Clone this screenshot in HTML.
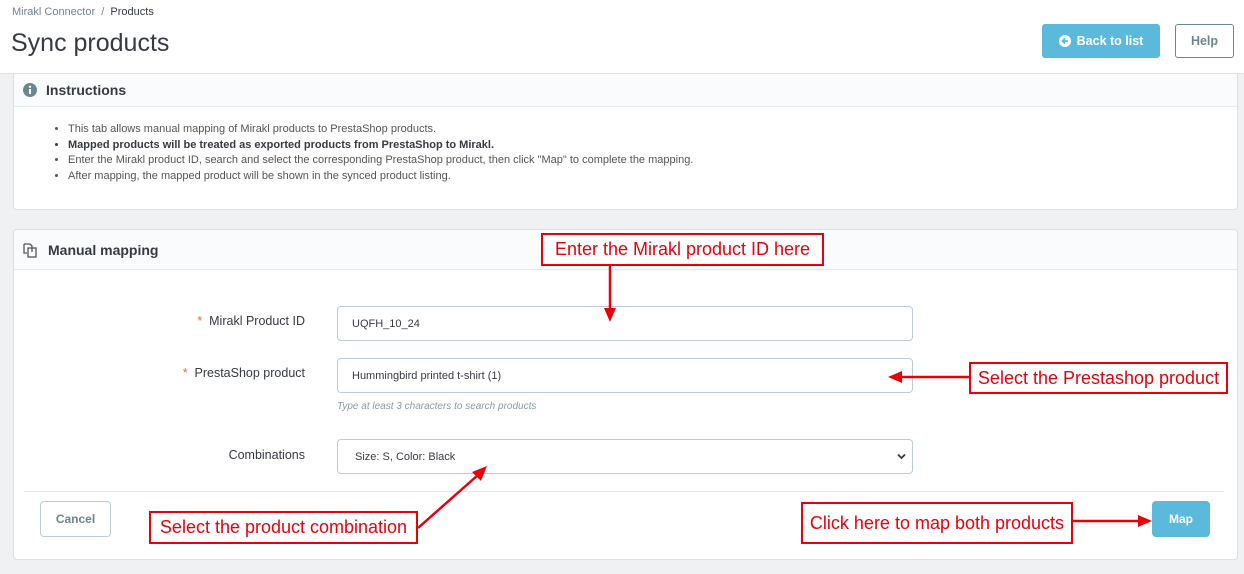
<!DOCTYPE html>
<html><head><meta charset="utf-8"><style>
*{box-sizing:border-box;margin:0;padding:0}
body{width:1244px;height:574px;background:#eff1f2;font-family:"Liberation Sans",sans-serif;color:#363a41;position:relative;overflow:hidden}
.a{position:absolute}
.hdr{left:0;top:0;width:1244px;height:74px;background:#fff;border-bottom:1px solid #dfe3e6}
.panel{background:#fff;border:1px solid #dbe0e3;border-radius:4px}
.ph{background:#fafbfc;border-bottom:1px solid #e4e8ea;font-weight:bold;font-size:14px;color:#363a41}
.inp{background:#fff;border:1px solid #bbcdd2;border-radius:4px;font-size:11px;color:#363a41;padding-left:14px;display:flex;align-items:center}
.lbl{font-size:12.5px;color:#363a41;text-align:right}
.red{border:2px solid #e8000b;background:#fff;color:#e8000b;font-size:18px;display:flex;align-items:center;justify-content:center;white-space:nowrap}
li{margin-left:14px}
</style></head><body>
<div class="a hdr"></div>
<div class="a" style="left:12px;top:6px;font-size:11px;color:#6c868e">Mirakl Connector &nbsp;/&nbsp; <span style="color:#363a41">Products</span></div>
<div class="a" style="left:11px;top:29px;font-size:25px;color:#363a41">Sync products</div>
<div class="a" style="left:1042px;top:24px;width:118px;height:34px;background:#5bbadb;border-radius:3px;color:#fff;font-weight:bold;font-size:12.5px;display:flex;align-items:center;justify-content:center;gap:6px"><svg width="12" height="12" viewBox="0 0 12 12"><circle cx="6" cy="6" r="6" fill="#fff"/><path d="M9 6H4M6 3.5L3.5 6 6 8.5" stroke="#5bbadb" stroke-width="1.8" fill="none"/></svg>Back to list</div>
<div class="a" style="left:1175px;top:24px;width:59px;height:34px;border:1px solid #6c868e;border-radius:3px;color:#6c868e;font-weight:bold;font-size:12.5px;display:flex;align-items:center;justify-content:center;background:#fff">Help</div>

<div class="a panel" style="left:13px;top:74px;width:1225px;height:136px;border-top:none;border-radius:0 0 4px 4px"></div>
<div class="a ph" style="left:14px;top:74px;width:1223px;height:33px;display:flex;align-items:center;padding-left:8px"><svg width="16" height="16" viewBox="0 0 16 16" style="margin-right:8px"><circle cx="8" cy="8" r="7" fill="#6c868e"/><rect x="7" y="7" width="2" height="5" fill="#fff"/><circle cx="8" cy="4.8" r="1.2" fill="#fff"/></svg>Instructions</div>
<ul class="a" style="left:54px;top:122px;font-size:11px;color:#555;line-height:15.5px">
<li>This tab allows manual mapping of Mirakl products to PrestaShop products.</li>
<li style="font-weight:bold;color:#363a41">Mapped products will be treated as exported products from PrestaShop to Mirakl.</li>
<li>Enter the Mirakl product ID, search and select the corresponding PrestaShop product, then click "Map" to complete the mapping.</li>
<li>After mapping, the mapped product will be shown in the synced product listing.</li>
</ul>

<div class="a panel" style="left:13px;top:229px;width:1225px;height:331px"></div>
<div class="a ph" style="left:14px;top:230px;width:1223px;height:40px;display:flex;align-items:center;padding-left:8px;border-radius:4px 4px 0 0"><svg width="18" height="18" viewBox="0 0 18 18" style="margin-right:8px" fill="none" stroke="#555" stroke-width="1.3"><path d="M2 3h6l2 2v6"/><path d="M2 3v9h3"/><rect x="6" y="7" width="8" height="9"/></svg>Manual mapping</div>
<div class="a" style="left:24px;top:491px;width:1200px;height:1px;background:#e4e8ea"></div>

<div class="a lbl" style="left:150px;top:314px;width:155px"><span style="color:#e76d3c">*</span>&nbsp; Mirakl Product ID</div>
<div class="a inp" style="left:337px;top:306px;width:576px;height:35px">UQFH_10_24</div>
<div class="a lbl" style="left:150px;top:366px;width:155px"><span style="color:#e76d3c">*</span>&nbsp; PrestaShop product</div>
<div class="a inp" style="left:337px;top:358px;width:576px;height:35px">Hummingbird printed t-shirt (1)</div>
<div class="a" style="left:337px;top:401px;font-size:10px;font-style:italic;color:#8a9aa0">Type at least 3 characters to search products</div>
<div class="a lbl" style="left:150px;top:448px;width:155px">Combinations</div>
<div class="a inp" style="left:337px;top:439px;width:576px;height:35px;padding-left:17px">Size: S, Color: Black<svg class="a" style="right:6px;top:13px" width="9" height="7" viewBox="0 0 9 7"><path d="M1 1.5l3.5 3.5 3.5-3.5" stroke="#363a41" stroke-width="1.8" fill="none"/></svg></div>

<div class="a" style="left:40px;top:501px;width:71px;height:36px;border:1px solid #bbcdd2;border-radius:4px;color:#6c868e;font-weight:bold;font-size:12px;display:flex;align-items:center;justify-content:center;background:#fff">Cancel</div>
<div class="a" style="left:1152px;top:501px;width:58px;height:36px;background:#5bbadb;border-radius:4px;color:#fff;font-weight:bold;font-size:12px;display:flex;align-items:center;justify-content:center">Map</div>

<div class="a red" style="left:541px;top:233px;width:283px;height:33px">Enter the Mirakl product ID here</div>
<div class="a red" style="left:969px;top:362px;width:259px;height:32px">Select the Prestashop product</div>
<div class="a red" style="left:149px;top:511px;width:269px;height:33px">Select the product combination</div>
<div class="a red" style="left:801px;top:502px;width:272px;height:42px">Click here to map both products</div>
<svg class="a" style="left:0;top:0" width="1244" height="574">
<g stroke="#e8000b" stroke-width="2.5" fill="#e8000b">
<line x1="610" y1="266" x2="610" y2="310"/><polygon points="604,308 616,308 610,322" stroke="none"/>
<line x1="969" y1="377" x2="900" y2="377"/><polygon points="902,371 902,383 888,377" stroke="none"/>
<line x1="418" y1="528" x2="478" y2="475"/><polygon points="472,472 481,481 487,466" stroke="none"/>
<line x1="1073" y1="521" x2="1140" y2="521"/><polygon points="1138,515 1138,527 1152,521" stroke="none"/>
</g></svg>
</body></html>
